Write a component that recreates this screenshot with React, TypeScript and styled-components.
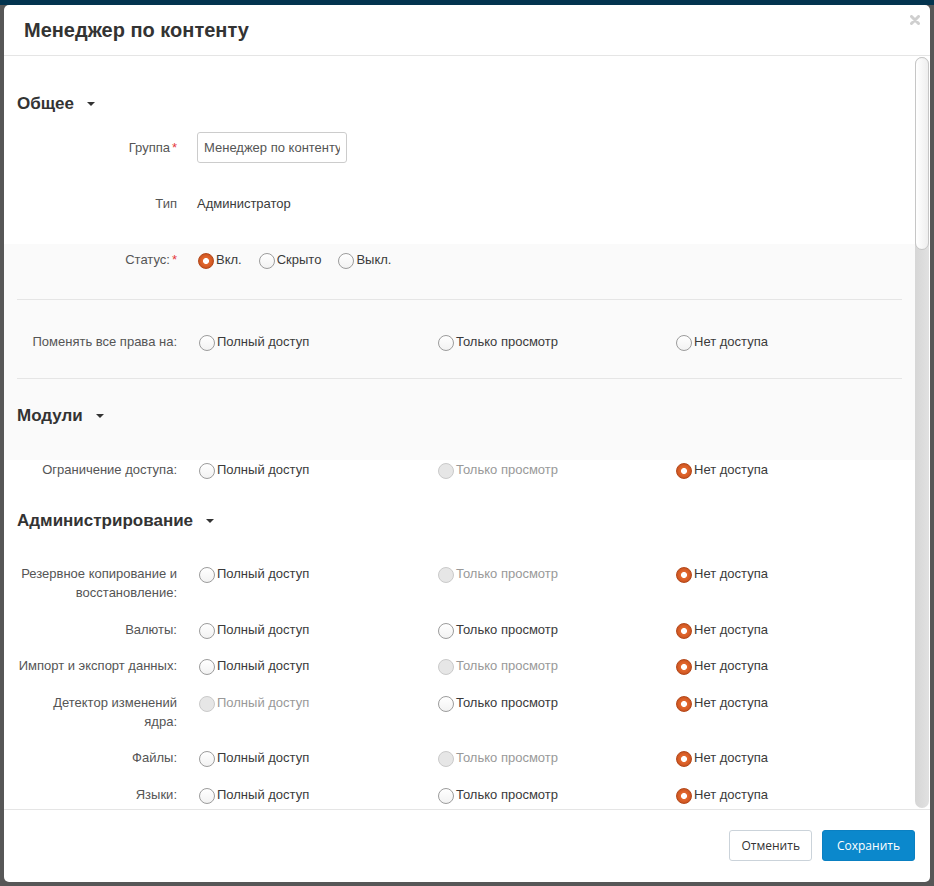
import React from "react";
import styled, { createGlobalStyle } from "styled-components";

const GlobalStyle = createGlobalStyle`
  html, body { margin: 0; padding: 0; }
  body {
    background: #585858;
    font-family: "Liberation Sans", Arial, sans-serif;
  }
  * { box-sizing: border-box; }
`;

const Page = styled.div`
  height: 886px;
  padding: 5px 4px 4px 4px;
  background: linear-gradient(#03344f 0, #03344f 5px, #575757 5px, #575757 100%);
  overflow: hidden;
`;

const Modal = styled.div`
  width: 926px;
  height: 877px;
  background: #fff;
  border-radius: 5px;
  display: flex;
  flex-direction: column;
  overflow: hidden;
`;

const Header = styled.div`
  display: flex;
  align-items: flex-start;
  justify-content: space-between;
  padding: 13px 10px 13px 20px;
  border-bottom: 1px solid #e5e5e5;
  flex-shrink: 0;
`;

const Title = styled.h3`
  margin: 0;
  font-size: 20px;
  line-height: 24px;
  font-weight: bold;
  color: #333;
`;

const CloseButton = styled.button`
  border: 0;
  background: none;
  padding: 0;
  margin-top: -3px;
  width: 10px;
  height: 10px;
  display: flex;
  cursor: pointer;
`;

const BodyWrap = styled.div`
  flex: 1;
  min-height: 0;
  display: flex;
`;

const Body = styled.div`
  flex: 1;
  min-height: 0;
  overflow-y: auto;
  scrollbar-width: none;
  padding: 36px 13px 24px 13px;
  display: flex;
  flex-direction: column;
`;

const ScrollTrack = styled.div`
  width: 14px;
  margin: 1px 1px 1px 0;
  border-radius: 7px;
  background: linear-gradient(to right, #d6d6d6, #e1e1e1);
  flex-shrink: 0;
`;

const ScrollThumb = styled.div`
  height: 193px;
  border-radius: 7px;
  border: 1px solid #c6c6c6;
  background: linear-gradient(to right, #ffffff, #eeeeee);
`;

const SectionTitle = styled.h4<{ $mt?: number; $mb?: number }>`
  display: flex;
  align-items: center;
  margin: ${(p) => p.$mt ?? 0}px 0 ${(p) => p.$mb ?? 16}px 0;
  font-size: 17px;
  line-height: 24px;
  font-weight: bold;
  color: #333;
  flex-shrink: 0;
`;

const Caret = styled.span`
  margin-left: 13px;
  width: 0;
  height: 0;
  border-left: 4px solid transparent;
  border-right: 4px solid transparent;
  border-top: 4px solid #333;
`;

const FormRow = styled.div<{ $mb?: number }>`
  display: grid;
  grid-template-columns: 160px 1fr;
  column-gap: 20px;
  min-height: 31px;
  margin-bottom: ${(p) => p.$mb ?? 25}px;
  flex-shrink: 0;
`;

const FormLabel = styled.label`
  text-align: right;
  padding-top: 6px;
  font-size: 13px;
  line-height: 19px;
  color: #555;
`;

const Required = styled.span`
  color: #e5383b;
  margin-left: 2px;
`;

const TextInput = styled.input`
  width: 150px;
  height: 31px;
  border: 1px solid #ccc;
  border-radius: 3px;
  padding: 0 6px;
  font-family: "Liberation Sans", Arial, sans-serif;
  font-size: 13px;
  color: #555;
  outline: none;
`;

const StaticText = styled.div`
  padding-top: 6px;
  font-size: 13px;
  line-height: 19px;
  color: #3a3a3a;
`;

const InlineOptions = styled.div`
  display: flex;
  align-items: flex-start;
  gap: 15px;
  padding-top: 6px;
  margin-left: -1px;
`;

const Band = styled.div`
  margin: 0 -13px;
  padding: 0 13px 16px 13px;
  background: #fafafa;
  display: flex;
  flex-direction: column;
  flex-shrink: 0;
`;

const Divider = styled.div`
  height: 1px;
  background: #e5e5e5;
  flex-shrink: 0;
`;

const PermList = styled.div<{ $flush?: boolean }>`
  display: flex;
  flex-direction: column;
  padding-top: ${(p) => (p.$flush ? 0 : 15)}px;
  flex-shrink: 0;
`;

const PermRow = styled.div<{ $mt?: number; $mb?: number }>`
  display: grid;
  grid-template-columns: 180px 239px 238px 1fr;
  align-items: start;
  margin: ${(p) => p.$mt ?? 0}px 0 ${(p) => p.$mb ?? 17.5}px 0;
  flex-shrink: 0;
`;

const PermLabel = styled.div`
  text-align: right;
  padding-right: 20px;
  font-size: 13px;
  line-height: 19px;
  color: #555;
`;

const OptionCell = styled.div`
  display: flex;
  align-items: flex-start;
`;

const Option = styled.label<{ $disabled?: boolean }>`
  display: flex;
  align-items: flex-start;
  font-size: 13px;
  line-height: 19px;
  color: ${(p) => (p.$disabled ? "#999" : "#3a3a3a")};
  white-space: nowrap;
  cursor: ${(p) => (p.$disabled ? "default" : "pointer")};
`;

type RadioState = "off" | "on" | "disabled";

const RadioCircle = styled.span<{ $state: RadioState }>`
  flex-shrink: 0;
  width: 16px;
  height: 16px;
  margin: 3px 2px 0 2px;
  border-radius: 50%;
  border: 1px solid
    ${(p) => (p.$state === "on" ? "#b4481a" : p.$state === "disabled" ? "#cacaca" : "#9c9c9c")};
  background: ${(p) =>
    p.$state === "on"
      ? "radial-gradient(circle at 50% 50%, #fff 0, #fff 2.6px, #e2682f 3.4px, #d45a24 6px, #c04d1c 8px)"
      : p.$state === "disabled"
      ? "#e6e6e6"
      : "linear-gradient(#ffffff, #f2f2f2)"};
`;

const Footer = styled.div`
  flex-shrink: 0;
  border-top: 1px solid #e5e5e5;
  padding: 20px 15px 21px 15px;
  display: flex;
  justify-content: flex-end;
  gap: 10px;
`;

const Button = styled.button<{ $primary?: boolean }>`
  height: 31px;
  padding: 0 ${(p) => (p.$primary ? 14 : 11)}px;
  border-radius: 3px;
  font-family: "Open Sans", "Liberation Sans", Arial, sans-serif;
  font-size: 12px;
  cursor: pointer;
  border: 1px solid ${(p) => (p.$primary ? "#0a80c2" : "#cbd3da")};
  background: ${(p) => (p.$primary ? "#0b88cc" : "#fff")};
  color: ${(p) => (p.$primary ? "#fff" : "#333")};
`;

const OPTIONS = ["Полный доступ", "Только просмотр", "Нет доступа"];

type Perm = { label: string; checked?: number; disabled?: number[] };

function Radio({ state, children }: { state: RadioState; children: React.ReactNode }) {
  return (
    <Option $disabled={state === "disabled"}>
      <RadioCircle $state={state} />
      {children}
    </Option>
  );
}

function PermissionRow({ perm, mt, mb }: { perm: Perm; mt?: number; mb?: number }) {
  return (
    <PermRow $mt={mt} $mb={mb}>
      <PermLabel>{perm.label}</PermLabel>
      {OPTIONS.map((o, i) => {
        const state: RadioState = perm.disabled?.includes(i)
          ? "disabled"
          : perm.checked === i
          ? "on"
          : "off";
        return (
          <OptionCell key={o}>
            <Radio state={state}>{o}</Radio>
          </OptionCell>
        );
      })}
    </PermRow>
  );
}

const adminRows: Perm[] = [
  { label: "Резервное копирование и восстановление:", checked: 2, disabled: [1] },
  { label: "Валюты:", checked: 2 },
  { label: "Импорт и экспорт данных:", checked: 2, disabled: [1] },
  { label: "Детектор изменений ядра:", checked: 2, disabled: [0] },
  { label: "Файлы:", checked: 2, disabled: [1] },
  { label: "Языки:", checked: 2 },
  { label: "Логи:", checked: 2, disabled: [0] },
  { label: "Магазины:", checked: 2 },
  { label: "Настройки:", checked: 2 },
  { label: "Синхронизация данных:", checked: 2, disabled: [1] },
  { label: "Статусы:", checked: 2 },
  { label: "Налоги:", checked: 2 },
  { label: "Способы доставки:", checked: 2 },
  { label: "Способы оплаты:", checked: 2 },
  { label: "Обновления:", checked: 2, disabled: [1] },
  { label: "Страны:", checked: 2 },
  { label: "Регионы:", checked: 2 },
  { label: "Зоны доставки:", checked: 2 },
  { label: "Модули:", checked: 2, disabled: [1] },
];

const moreSections: { title: string; rows: Perm[] }[] = [
  {
    title: "Каталог",
    rows: [
      { label: "Товары:", checked: 2 },
      { label: "Категории:", checked: 2 },
      { label: "Характеристики:", checked: 2 },
      { label: "Фильтры:", checked: 2 },
      { label: "Опции:", checked: 2 },
      { label: "Скидки:", checked: 2 },
    ],
  },
  {
    title: "Маркетинг",
    rows: [
      { label: "Акции:", checked: 2 },
      { label: "Рассылки:", checked: 2 },
      { label: "Баннеры:", checked: 2 },
      { label: "Подарочные сертификаты:", checked: 2 },
      { label: "Бонусные баллы:", checked: 2 },
    ],
  },
  {
    title: "Заказы",
    rows: [
      { label: "Заказы:", checked: 2 },
      { label: "Отгрузки:", checked: 2 },
      { label: "Возвраты:", checked: 2 },
      { label: "Брошенные корзины:", checked: 2 },
      { label: "Статистика продаж:", checked: 2, disabled: [1] },
    ],
  },
  {
    title: "Пользователи",
    rows: [
      { label: "Администраторы:", checked: 2 },
      { label: "Покупатели:", checked: 2 },
      { label: "Группы пользователей:", checked: 2 },
      { label: "Поля профиля:", checked: 2 },
    ],
  },
  {
    title: "Веб-сайт",
    rows: [
      { label: "Страницы:", checked: 2 },
      { label: "Меню:", checked: 2 },
      { label: "SEO:", checked: 2 },
      { label: "Формы:", checked: 2 },
    ],
  },
  {
    title: "Дизайн",
    rows: [
      { label: "Темы:", checked: 2 },
      { label: "Макеты:", checked: 2 },
      { label: "Шаблоны писем:", checked: 2 },
      { label: "Документы:", checked: 2 },
      { label: "Логотипы:", checked: 2 },
    ],
  },
];

function CloseIcon() {
  return (
    <svg width="10" height="10" viewBox="0 0 10 10">
      <path d="M1.5 1.5 L8.5 8.5 M8.5 1.5 L1.5 8.5" stroke="#cfcfcf" strokeWidth="3" strokeLinecap="round" />
    </svg>
  );
}

export default function App() {
  return (
    <>
      <GlobalStyle />
      <Page>
        <Modal>
          <Header>
            <Title>Менеджер по контенту</Title>
            <CloseButton aria-label="Закрыть">
              <CloseIcon />
            </CloseButton>
          </Header>
          <BodyWrap>
            <Body>
              <SectionTitle>
                Общее <Caret />
              </SectionTitle>
              <FormRow>
                <FormLabel>
                  Группа<Required>*</Required>
                </FormLabel>
                <div>
                  <TextInput defaultValue="Менеджер по контенту" />
                </div>
              </FormRow>
              <FormRow>
                <FormLabel>Тип</FormLabel>
                <StaticText>Администратор</StaticText>
              </FormRow>
              <Band>
                <FormRow $mb={24}>
                  <FormLabel>
                    Статус:<Required>*</Required>
                  </FormLabel>
                  <InlineOptions>
                    <Radio state="on">Вкл.</Radio>
                    <Radio state="off">Скрыто</Radio>
                    <Radio state="off">Выкл.</Radio>
                  </InlineOptions>
                </FormRow>
                <Divider />
                <PermissionRow perm={{ label: "Поменять все права на:" }} mt={32} mb={27} />
                <Divider />
                <SectionTitle $mt={25}>
                  Модули <Caret />
                </SectionTitle>
              </Band>
              <PermList $flush>
                <PermissionRow
                  perm={{ label: "Ограничение доступа:", checked: 2, disabled: [1] }}
                  mb={18}
                />
              </PermList>
              <SectionTitle $mt={12}>
                Администрирование <Caret />
              </SectionTitle>
              <PermList>
                {adminRows.map((r) => (
                  <PermissionRow key={r.label} perm={r} />
                ))}
              </PermList>
              {moreSections.map((s) => (
                <React.Fragment key={s.title}>
                  <SectionTitle $mt={12}>
                    {s.title} <Caret />
                  </SectionTitle>
                  <PermList>
                    {s.rows.map((r) => (
                      <PermissionRow key={r.label} perm={r} />
                    ))}
                  </PermList>
                </React.Fragment>
              ))}
            </Body>
            <ScrollTrack>
              <ScrollThumb />
            </ScrollTrack>
          </BodyWrap>
          <Footer>
            <Button>Отменить</Button>
            <Button $primary>Сохранить</Button>
          </Footer>
        </Modal>
      </Page>
    </>
  );
}
